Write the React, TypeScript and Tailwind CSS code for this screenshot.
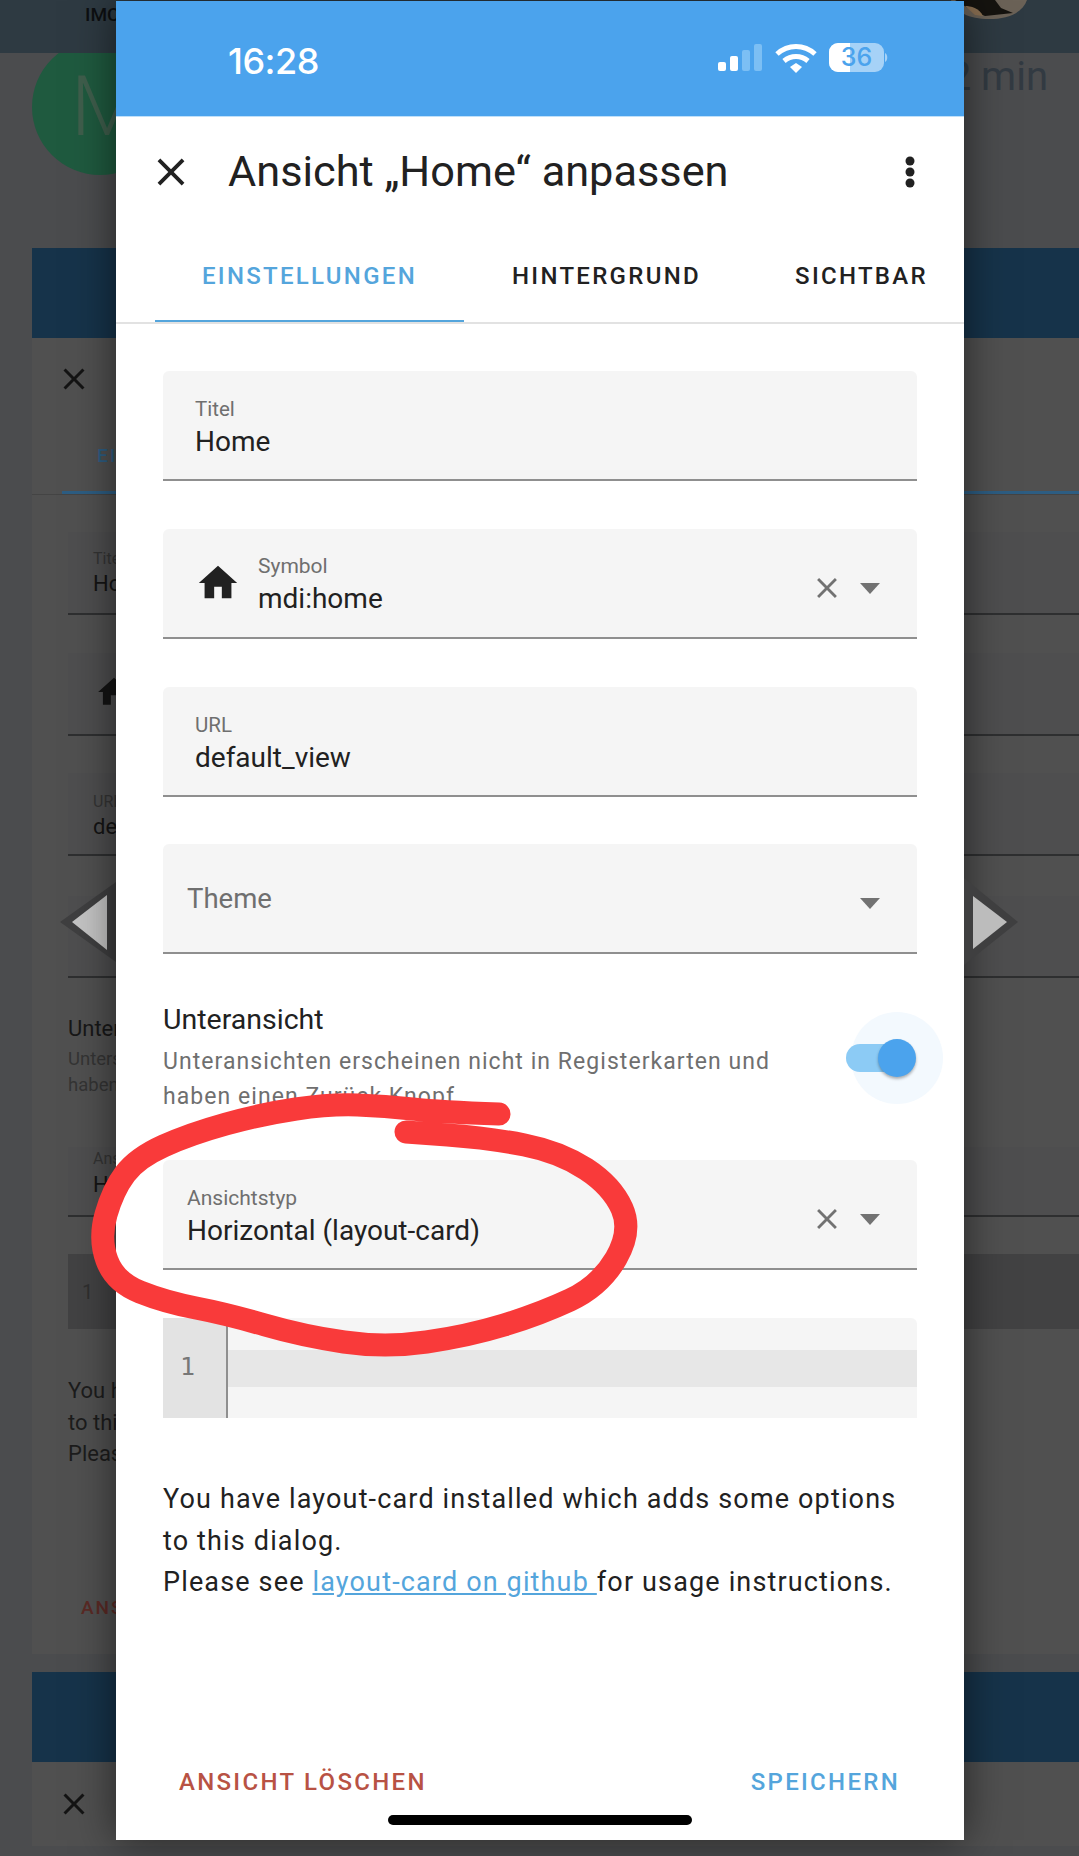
import React from 'react';

const closePath = 'M19 6.41 17.59 5 12 10.59 6.41 5 5 6.41 10.59 12 5 17.59 6.41 19 12 13.41 17.59 19 19 17.59 13.41 12z';
const homePath = 'M10 20v-6h4v6h5v-8h3L12 3 2 12h3v8z';

const scribble: [number, number][] = [
  [499, 1114], [440, 1112], [385, 1106], [330, 1104], [262, 1114], [190, 1134], [137, 1158], [113, 1190], [99, 1239],
  [115, 1282], [165, 1302], [227, 1314], [303, 1336], [385, 1348], [468, 1336], [540, 1314], [600, 1286], [632, 1231],
  [612, 1186], [560, 1152], [489, 1138], [406, 1132],
];

// smooth line through the stroke points, using midpoints as curve ends
const scribblePath = () => {
  let d = `M${scribble[0][0]} ${scribble[0][1]}`;
  for (let i = 1; i < scribble.length - 1; i++) {
    const [x, y] = scribble[i];
    const [nx, ny] = scribble[i + 1];
    d += ` Q${x} ${y} ${(x + nx) / 2} ${(y + ny) / 2}`;
  }
  const last = scribble[scribble.length - 1];
  return d + ` L${last[0]} ${last[1]}`;
};

const Icon = ({ d, className }: { d: string; className: string }) => (
  <svg viewBox="0 0 24 24" className={className} fill="currentColor">
    <path d={d} />
  </svg>
);

const Caret = () => (
  <svg viewBox="0 0 20 11" className="h-[11px] w-[20px] text-[#727272]" fill="currentColor">
    <path d="M0 0h20L10 11z" />
  </svg>
);

const Field = ({ label, value, className = '' }: { label: string; value: string; className?: string }) => (
  <div className={`h-[110px] rounded-t-[6px] border-b-2 border-[#8f8f8f] bg-[#f5f5f5] pl-[32px] pt-[23px] ${className}`}>
    <div className="text-[20.5px] leading-[30px] text-[#6f6f6f]">{label}</div>
    <div className="text-[28px] leading-[36px] text-[#212121]">{value}</div>
  </div>
);

const SelectActions = ({ clear = true }: { clear?: boolean }) => (
  <div className="mt-[10px] flex items-center gap-[16px]">
    {clear && <Icon d={closePath} className="h-[34px] w-[34px] text-[#727272]" />}
    <Caret />
  </div>
);

const BackField = ({ className, children }: { className: string; children: React.ReactNode }) => (
  <div className={`ml-[36px] border-b-2 border-[#2e2f30] bg-[#4e4e4f] pl-[25px] ${className}`}>{children}</div>
);

// what stays visible of the page behind the dialog
const Backdrop = () => (
  <div className="h-[1856px] overflow-hidden bg-[#4b4c4e] font-['Roboto',sans-serif]">
    <div className="relative z-10 flex h-[53px] justify-between bg-[#2e3a42] pl-[85px] pr-[52px]">
      <div className="pt-[3px] text-[19px] font-medium leading-[24px] text-[#0d0f11]">IMC</div>
      <svg viewBox="0 0 76 19" className="h-[19px] w-[76px]">
        <path d="M0 0h76c-4 12-18 19-38 19S4 12 0 0z" fill="#6b6257" />
        <path d="M4 0h40l6 8 12 5-28 3-14-6z" fill="#15130f" />
        <path d="M14 6c6 0 14 2 18 10l-8-1z" fill="#8a6f52" />
      </svg>
    </div>
    <div className="flex h-[195px] items-start justify-between pr-[31px]">
      <div className="ml-[32px] mt-[-14px] flex h-[136px] w-[136px] items-center justify-center rounded-full bg-[#1f5a3f] pl-[14px] text-[84px] font-light text-[#3f5e4c]">
        M
      </div>
      <div className="pt-[2px] text-[40px] leading-[44px] text-[#323a42]">2 min</div>
    </div>
    <div className="ml-[32px] h-[1406px] bg-[#505050]">
      <div className="h-[90px] bg-[#16334a]" />
      <div className="flex h-[82px] items-center pl-[24px]">
        <Icon d={closePath} className="h-[36px] w-[36px] text-[#141414]" />
      </div>
      <div className="h-[75px] border-b border-[#444] pl-[30px]">
        <div className="h-[74px] border-b-[3px] border-[#2d5d82] pl-[35px] pt-[22px] text-[19px] font-medium tracking-[2px] text-[#2d5d82]">EI</div>
      </div>
      <BackField className="mt-[37px] h-[83px] pt-[15px]">
        <div className="text-[16px] leading-[24px] text-[#343434]">Titel</div>
        <div className="text-[22px] leading-[26px] text-[#141414]">Home</div>
      </BackField>
      <BackField className="mt-[38px] h-[83px] pl-[27px] pt-[20px]">
        <Icon d={homePath} className="h-[38px] w-[38px] text-[#141414]" />
      </BackField>
      <BackField className="mt-[37px] h-[83px] pt-[17px]">
        <div className="text-[16px] leading-[24px] text-[#343434]">URL</div>
        <div className="text-[22px] leading-[26px] text-[#141414]">default_view</div>
      </BackField>
      <BackField className="mt-[40px] h-[82px] pt-[26px] text-[21px] text-[#343434]">Theme</BackField>
      <div className="ml-[36px] mt-[36px] text-[22px] leading-[30px] text-[#171717]">Unter</div>
      <div className="ml-[36px] mt-[2px] text-[18.5px] leading-[26px] text-[#343434]">
        Unters<br />haben
      </div>
      <BackField className="mt-[49px] h-[70px] pl-[19px]">
        <div className="text-[16px] leading-[24px] text-[#343434]">Ansichtstyp</div>
        <div className="text-[22px] leading-[28px] text-[#141414]">Horizontal</div>
      </BackField>
      <div className="ml-[36px] mt-[37px] flex h-[75px] items-center bg-[#424243] pl-[14px] text-[20px] text-[#2f2f2f]">1</div>
      <div className="ml-[36px] mt-[46px] text-[22px] leading-[31.5px] text-[#1c1c1c]">
        You have<br />to this<br />Please
      </div>
      <div className="ml-[49px] mt-[124px] text-[19px] font-medium leading-[28px] tracking-[2px] text-[#5b2a25]">ANSICHT</div>
    </div>
    <div className="ml-[32px] mt-[18px] h-[90px] bg-[#16334a]" />
    <div className="ml-[32px] flex h-[84px] items-center bg-[#505050] pl-[24px]">
      <Icon d={closePath} className="h-[36px] w-[36px] text-[#141414]" />
    </div>
  </div>
);

const Dialog = () => (
  <div className="absolute left-[116px] top-[1px] z-20 flex h-[1839px] w-[848px] flex-col bg-white font-['Roboto',sans-serif] shadow-[0_0_40px_rgba(0,0,0,0.55)]">
    <div className="flex h-[116px] items-center justify-between border-b border-[#bfe0fa] bg-[#4ba3ed] pb-[2px] pl-[112px] pr-[75px]">
      <div className="mt-[6px] font-['Inter',sans-serif] text-[36px] font-medium leading-[40px] tracking-[-0.5px] text-white">16:28</div>
      <svg viewBox="0 0 172 32" className="h-[32px] w-[172px]">
        <rect x="1" y="20" width="8" height="9" rx="2" fill="#fff" />
        <rect x="13" y="14" width="8" height="15" rx="2" fill="#fff" />
        <rect x="25" y="8" width="8" height="21" rx="2" fill="#7cbff4" />
        <rect x="37" y="2" width="8" height="27" rx="2" fill="#7cbff4" />
        <path d="M60 12c11-10 27-10 38 0" fill="none" stroke="#fff" strokeWidth="5" />
        <path d="M67 19c7-6 17-6 24 0" fill="none" stroke="#fff" strokeWidth="5" />
        <path d="M73 25l6-4 6 4-6 6z" fill="#fff" />
        <rect x="112" y="1" width="55" height="29" rx="9" fill="#a6d2f7" />
        <path d="M121 1h12v29h-12a9 9 0 0 1-9-9V10a9 9 0 0 1 9-9z" fill="#fff" />
        <path d="M168 11c3 1 3 8 0 9z" fill="#a6d2f7" />
        <text x="139.5" y="24" textAnchor="middle" fontSize="25" fontWeight="500" fontFamily="Inter, sans-serif" fill="#4ba3ed">36</text>
      </svg>
    </div>
    <div className="flex h-[109px] items-center pl-[32px] pr-[49px]">
      <Icon d={closePath} className="h-[46px] w-[46px] text-[#212121]" />
      <div className="ml-[34px] flex-1 text-[43.3px] leading-[50px] text-[#212121]">Ansicht „Home“ anpassen</div>
      <svg viewBox="0 0 10 32" className="h-[32px] w-[10px] text-[#212121]" fill="currentColor">
        <circle cx="5" cy="5" r="4.5" />
        <circle cx="5" cy="16" r="4.5" />
        <circle cx="5" cy="27" r="4.5" />
      </svg>
    </div>
    <div className="flex h-[98px] overflow-hidden border-b-2 border-[#e2e2e2] pl-[39px] text-[24px] font-medium tracking-[2.3px] text-[#212121]">
      <div className="flex h-[98px] w-[309px] shrink-0 items-center justify-center border-b-[4px] border-[#54a5dc] pt-[6px] text-[#54a5dc]">EINSTELLUNGEN</div>
      <div className="flex w-[285px] shrink-0 items-center justify-center pt-[3px]">HINTERGRUND</div>
      <div className="flex w-[225px] shrink-0 items-center justify-center pt-[3px]">SICHTBAR</div>
    </div>
    <div className="flex flex-1 flex-col pl-[47px] pr-[47px]">
      <Field className="mt-[47px]" label="Titel" value="Home" />
      <div className="mt-[48px] flex h-[110px] items-center rounded-t-[6px] border-b-2 border-[#8f8f8f] bg-[#f5f5f5] pl-[32px] pr-[37px]">
        <Icon d={homePath} className="h-[46px] w-[46px] text-[#212121]" />
        <div className="ml-[17px] flex-1 pt-[2px]">
          <div className="text-[21px] leading-[30px] text-[#6f6f6f]">Symbol</div>
          <div className="text-[28px] leading-[36px] text-[#212121]">mdi:home</div>
        </div>
        <SelectActions />
      </div>
      <Field className="mt-[48px]" label="URL" value="default_view" />
      <div className="mt-[47px] flex h-[110px] items-center justify-between rounded-t-[6px] border-b-2 border-[#8f8f8f] bg-[#f5f5f5] pl-[24px] pr-[37px]">
        <div className="pt-[2px] text-[27.5px] text-[#6f6f6f]">Theme</div>
        <SelectActions clear={false} />
      </div>
      <div className="relative mt-[48px] h-[158px]">
        <div className="text-[28.5px] leading-[36px] text-[#212121]">Unteransicht</div>
        <div className="mt-[6px] w-[625px] text-[23px] leading-[35px] tracking-[1.05px] text-[#6f6f6f]">
          Unteransichten erscheinen nicht in Registerkarten und haben einen Zurück Knopf.
        </div>
        <div className="absolute right-[-26px] top-[10px] flex h-[92px] w-[92px] items-center justify-center rounded-full bg-[#f3f9fe]">
          <div className="absolute left-[-5px] h-[28px] w-[60px] rounded-full bg-[#8ccbf5]" />
          <div className="absolute left-[27px] h-[38px] w-[38px] rounded-full bg-[#4ba3ed] shadow-[0_2px_3px_rgba(0,0,0,0.3)]" />
        </div>
      </div>
      <div className="flex h-[110px] items-center justify-between rounded-t-[6px] border-b-2 border-[#8f8f8f] bg-[#f5f5f5] pl-[24px] pr-[37px]">
        <div className="pt-[4px]">
          <div className="text-[21px] leading-[30px] text-[#6f6f6f]">Ansichtstyp</div>
          <div className="text-[28px] leading-[36px] text-[#212121]">Horizontal (layout-card)</div>
        </div>
        <SelectActions />
      </div>
      <div className="mt-[48px] flex h-[100px] overflow-hidden rounded-tr-[6px] bg-[#f5f5f5]">
        <div className="flex w-[65px] items-center justify-center border-r-2 border-[#8f8f8f] bg-[#e3e3e3] pb-[2px] pr-[14px] font-['DejaVu_Sans_Mono',monospace] text-[25px] text-[#777]">
          1
        </div>
        <div className="mt-[32px] h-[37px] flex-1 bg-[#e7e7e7]" />
      </div>
      <div className="mt-[61px] text-[27px] leading-[41.5px] tracking-[1.15px] text-[#212121]">
        You have layout-card installed which adds some options to this dialog.
        <br />
        Please see <span className="text-[#54a5dc] underline">layout-card on github </span>for usage instructions.
      </div>
    </div>
    <div className="flex items-center justify-between pb-[15px] pl-[63px] pr-[64px] text-[24px] font-medium tracking-[2.3px]">
      <span className="text-[#b85244]">ANSICHT LÖSCHEN</span>
      <span className="text-[#54a5dc]">SPEICHERN</span>
    </div>
    <div className="mx-auto mb-[15px] h-[10px] w-[304px] rounded-full bg-black" />
  </div>
);

export default function App() {
  return (
    <div className="relative h-[1856px] w-[1079px] overflow-hidden">
      <Backdrop />
      <svg viewBox="0 0 130 200" className="absolute left-0 top-[840px] h-[200px] w-[130px]">
        <path d="M116 42 60 82l56 40z" fill="#3f3f40" />
        <path d="M107 55 72 82l35 28z" fill="#c4c4c4" />
      </svg>
      <Dialog />
      <svg viewBox="0 0 110 120" className="absolute left-[964px] top-[860px] z-20 h-[120px] w-[110px]">
        <path d="M0 18 54 62 0 105z" fill="#3f3f40" />
        <path d="M9 36 43 62 9 89z" fill="#bcbcbc" />
      </svg>
      <svg viewBox="0 0 1079 1856" className="pointer-events-none absolute left-0 top-0 z-30 h-[1856px] w-[1079px]">
        <path d={scribblePath()} fill="none" stroke="#f93a3a" strokeWidth="23" strokeLinecap="round" strokeLinejoin="round" />
      </svg>
    </div>
  );
}
